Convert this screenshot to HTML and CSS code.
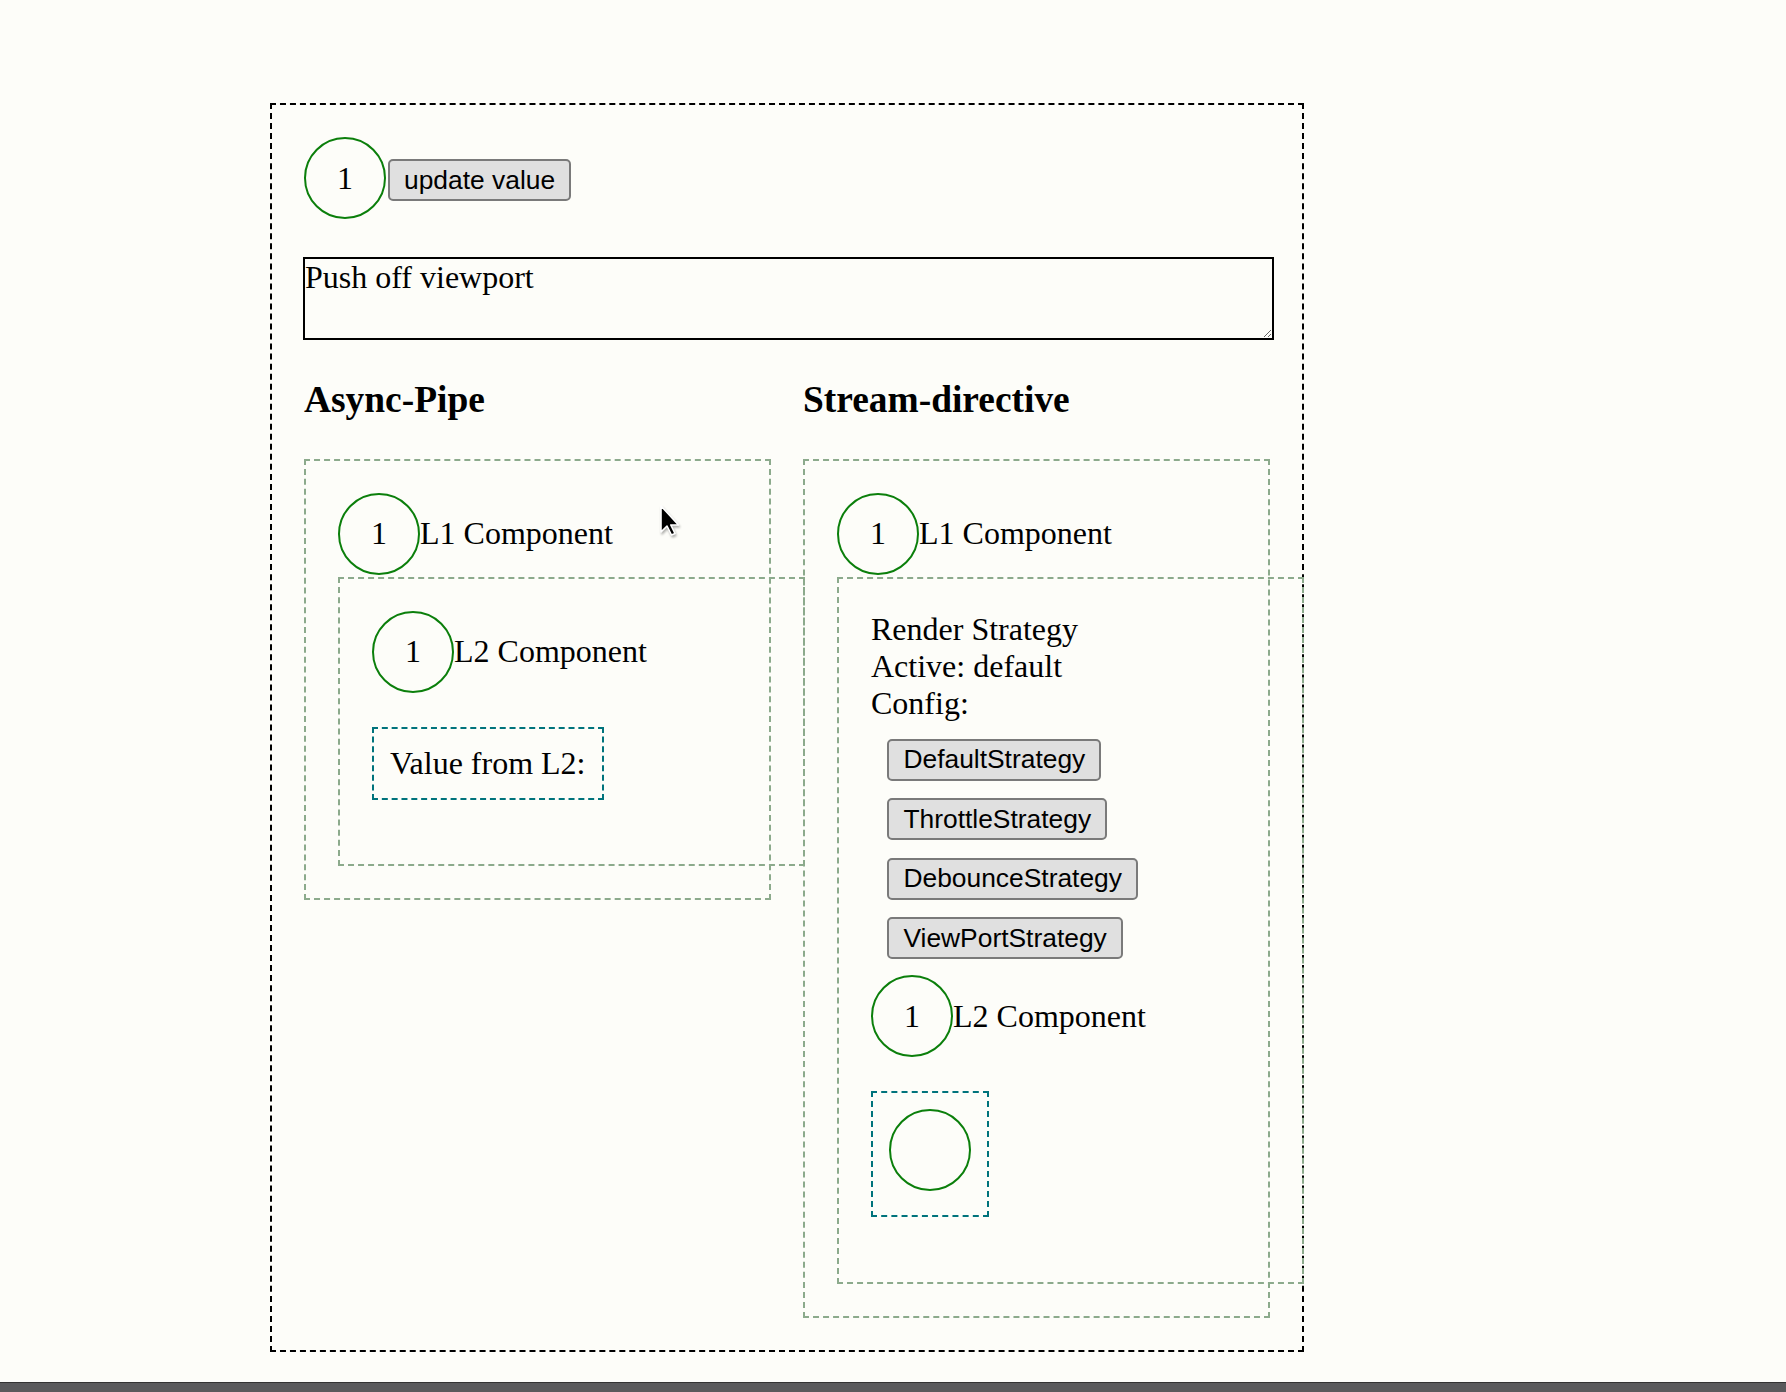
FILE: index.html
```html
<!DOCTYPE html>
<html lang="en">
<head>
<meta charset="utf-8">
<title>Render Strategies</title>
<link rel="stylesheet" href="styles.css">
</head>
<body>
<div class="page">
  <div class="outer">
    <div class="top-row">
      <div class="circle">1</div>
      <button class="btn top-btn">update value</button>
    </div>
    <textarea class="push">Push off viewport</textarea>
    <div class="columns">
      <section class="col">
        <h3>Async-Pipe</h3>
        <div class="comp l1">
          <div class="row"><div class="circle">1</div><span>L1 Component</span></div>
          <div class="comp l2">
            <div class="row"><div class="circle">1</div><span>L2 Component</span></div>
            <div class="value">Value from L2:</div>
          </div>
        </div>
      </section>
      <section class="col">
        <h3>Stream-directive</h3>
        <div class="comp l1">
          <div class="row"><div class="circle">1</div><span>L1 Component</span></div>
          <div class="comp l2">
            <div class="strategy-info">
              <div>Render Strategy</div>
              <div>Active: default</div>
              <div>Config:</div>
            </div>
            <div class="strategy">
              <button class="btn">DefaultStrategy</button>
              <button class="btn">ThrottleStrategy</button>
              <button class="btn">DebounceStrategy</button>
              <button class="btn">ViewPortStrategy</button>
            </div>
            <div class="row"><div class="circle">1</div><span>L2 Component</span></div>
            <div class="value empty"><div class="circle"></div></div>
          </div>
        </div>
      </section>
    </div>
  </div>
  <div class="footer-bar"></div>
</div>
<svg class="cursor" width="26" height="36" viewBox="0 0 26 36" aria-hidden="true">
  <path d="M5 4 L5 30 L11 24 L15.5 33 L19 31.5 L14.8 23 L22.5 23 Z" fill="#000" stroke="#fff" stroke-width="1.6" stroke-linejoin="round"/>
</svg>
</body>
</html>
```
FILE: styles.css
```css
html, body {
  margin: 0;
  padding: 0;
}

body {
  background: #fdfdf9;
  font-family: "Liberation Serif", "Times New Roman", serif;
  font-size: 32px;
  color: #000;
  position: relative;
  overflow: hidden;
}

.page {
  padding: 103px 0 0 270px;
}

.outer {
  width: 1034px;
  box-sizing: border-box;
  border: 2px dashed #000;
  padding: 32px;
}

.top-row {
  display: flex;
  align-items: center;
}

.circle {
  width: 82px;
  height: 82px;
  box-sizing: border-box;
  border: 2px solid #0b7f0b;
  border-radius: 50%;
  display: flex;
  align-items: center;
  justify-content: center;
  flex: none;
}

.btn {
  font-family: "Liberation Sans", Arial, sans-serif;
  font-size: 26.4px;
  line-height: normal;
  padding: 3.5px 14px;
  margin: 0;
  border: 2px solid #7a7a7a;
  border-radius: 5px;
  background: #e0e0e0;
  color: #000;
}

.top-btn {
  margin: 4px 0 0 2px;
}

.push {
  display: block;
  box-sizing: border-box;
  width: 971px;
  height: 83px;
  margin: 38px 0 0 -1px;
  padding: 0;
  border: 2px solid #000;
  font-family: "Liberation Serif", "Times New Roman", serif;
  font-size: 32px;
  line-height: normal;
  background: transparent;
  color: #000;
}

.columns {
  display: grid;
  grid-template-columns: 1fr 1fr;
  column-gap: 32px;
}

.col h3 {
  font-size: 37.44px;
  font-weight: bold;
  line-height: normal;
  margin: 38px 0 37.5px;
}

.comp {
  border: 2px dashed #8caa8c;
  padding: 32px;
}

.l1 {
  box-sizing: border-box;
  width: 100%;
}

.l2 {
  box-sizing: content-box;
  width: 100%;
}

.row {
  display: flex;
  align-items: center;
  height: 82px;
  margin-bottom: 2px;
}

.value {
  display: block;
  width: fit-content;
  border: 2px dashed #00737c;
  padding: 16px;
  margin: 34px 0 32.5px;
}

.value.empty {
  padding: 16px 16px 24px;
}

.strategy {
  display: flex;
  flex-direction: column;
  align-items: flex-start;
  gap: 17.6px;
  padding: 17px 0 16px 16.4px;
}

.footer-bar {
  margin: 30px 0 0 -270px;
  height: 10px;
  box-sizing: border-box;
  border-top: 1px solid #333;
  background: #5a5a5c;
}

.cursor {
  position: absolute;
  left: 656px;
  top: 502px;
  filter: drop-shadow(1px 2px 1px rgba(0, 0, 0, 0.3));
}
```
